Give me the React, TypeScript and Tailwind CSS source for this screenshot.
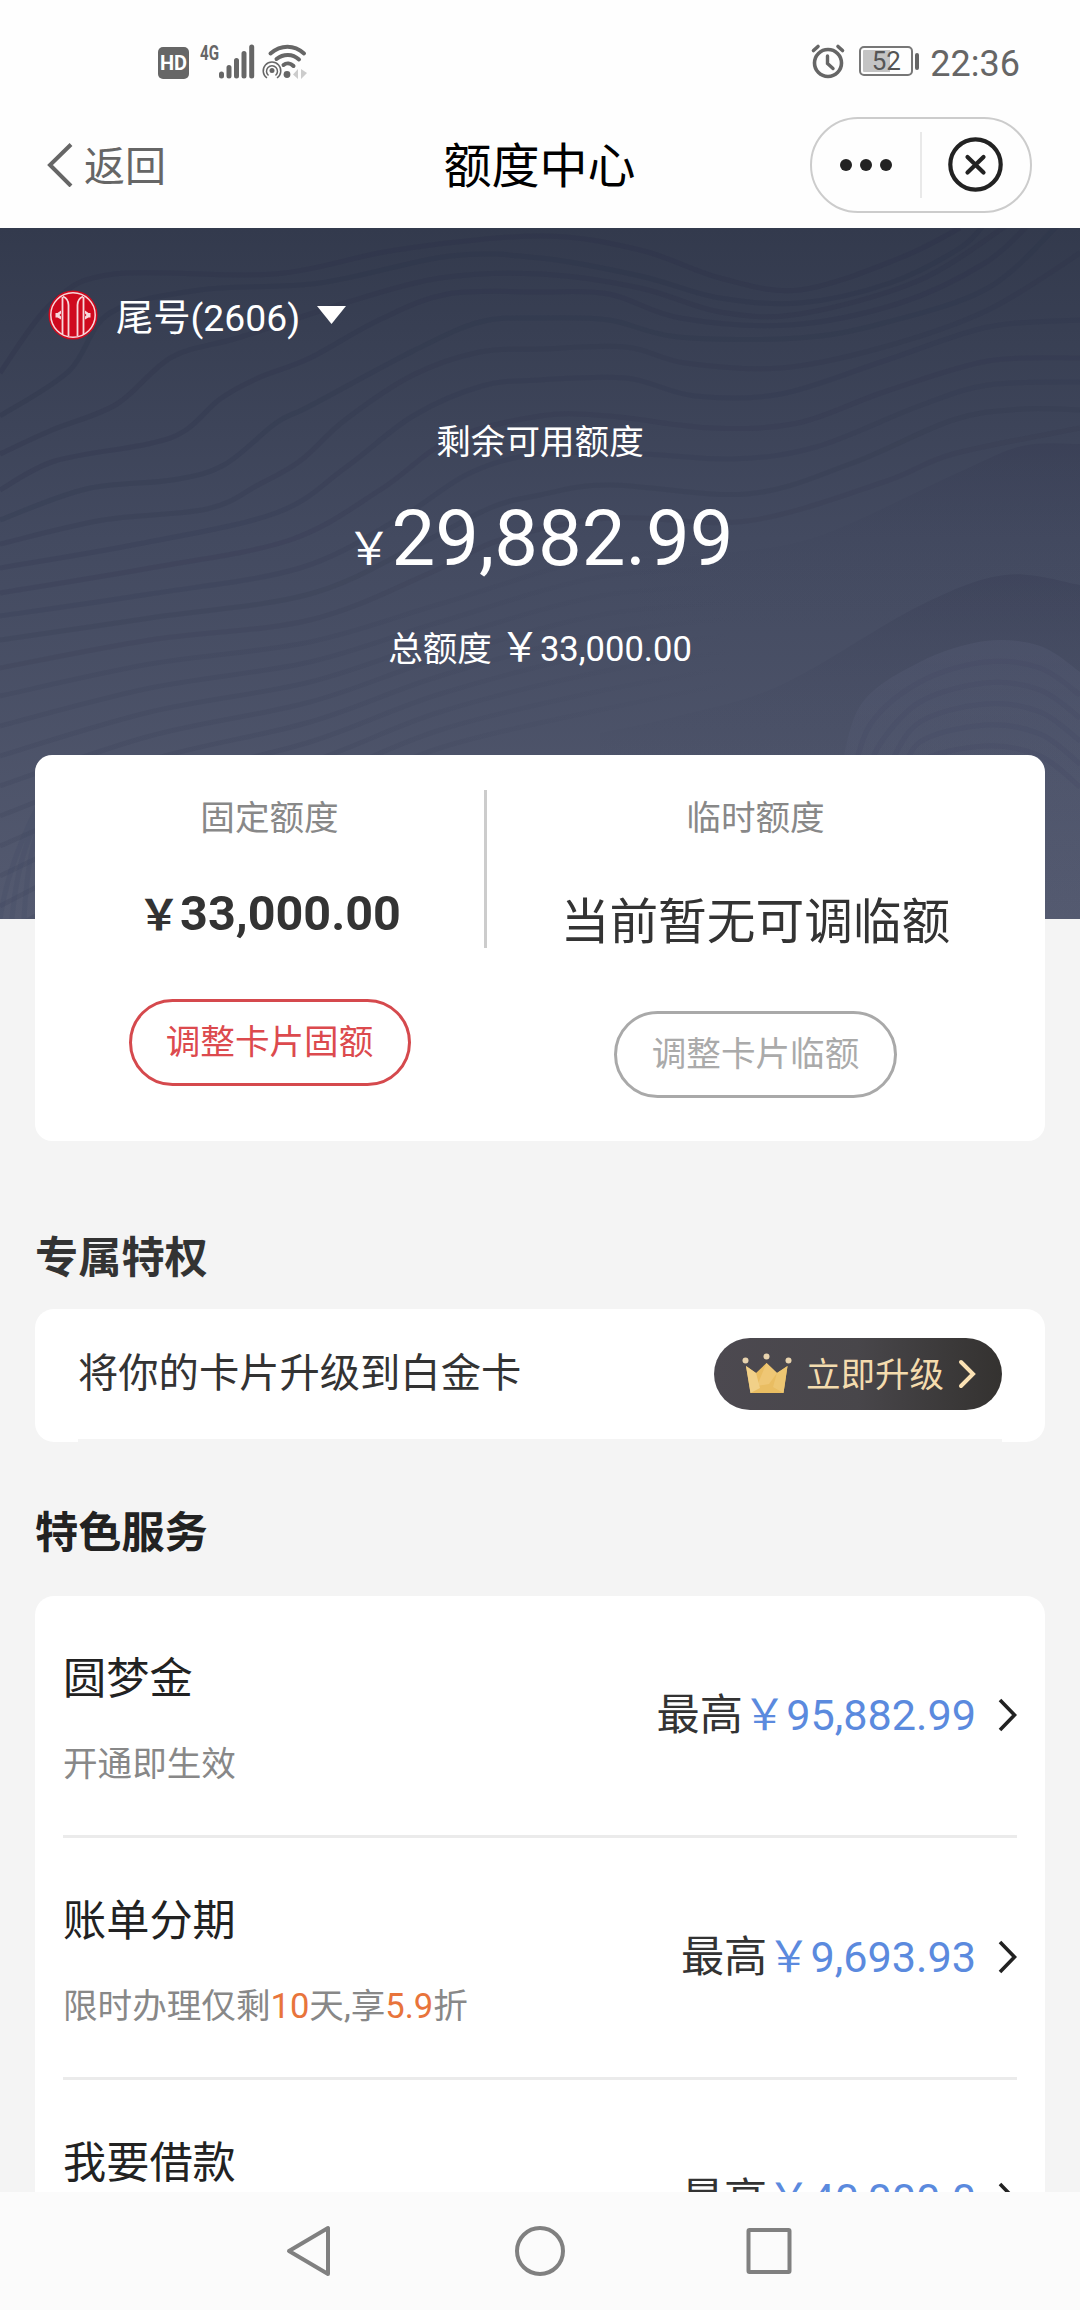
import { Fragment } from "react";

type Point = [number, number];

// Catmull-Rom spline through the points, written as cubic segments
const curve = (points: Point[]) => {
  let d = `M${points[0][0]} ${points[0][1]}`;
  for (let i = 0; i < points.length - 1; i++) {
    const p0 = points[i - 1] ?? points[i];
    const p1 = points[i];
    const p2 = points[i + 1];
    const p3 = points[i + 2] ?? p2;
    d += ` C${p1[0] + (p2[0] - p0[0]) / 6} ${p1[1] + (p2[1] - p0[1]) / 6} ${p2[0] - (p3[0] - p1[0]) / 6} ${p2[1] - (p3[1] - p1[1]) / 6} ${p2[0]} ${p2[1]}`;
  }
  return d;
};

const ridges: Point[][] = [
  [[0, 145], [52, 75], [114, 46], [275, 46], [396, 22], [540, 8], [640, 22], [720, 50], [800, 62], [900, 30], [960, 0]],
  [[0, 188], [69, 143], [110, 85], [200, 62], [320, 55], [450, 28], [540, 30], [640, 48], [720, 70], [800, 75], [890, 55], [960, 20], [985, -5]],
  [[0, 226], [52, 202], [117, 176], [172, 129], [241, 109], [345, 75], [440, 50], [540, 46], [640, 60], [720, 84], [800, 86], [920, 52], [1010, -5]],
  [[0, 262], [55, 233], [148, 216], [186, 202], [220, 171], [258, 150], [310, 130], [379, 92], [448, 66], [540, 64], [609, 66], [680, 90], [790, 97], [900, 75], [985, 35], [1030, -5]],
  [[0, 292], [86, 261], [172, 252], [224, 237], [276, 195], [310, 178], [413, 123], [480, 94], [540, 90], [609, 92], [678, 109], [798, 110], [884, 95], [988, 60], [1060, -5]],
  [[0, 316], [103, 292], [207, 281], [258, 257], [300, 233], [345, 192], [413, 147], [480, 124], [540, 121], [626, 119], [685, 135], [781, 140], [884, 119], [988, 82], [1080, 25]],
  [[0, 340], [138, 316], [276, 285], [345, 240], [413, 188], [482, 158], [540, 152], [626, 150], [695, 168], [781, 166], [884, 133], [988, 99], [1080, 92]],
  [[0, 365], [150, 340], [290, 312], [380, 262], [450, 212], [540, 188], [609, 188], [712, 200], [798, 195], [884, 164], [988, 133], [1080, 130]],
  [[0, 388], [150, 366], [300, 340], [400, 290], [470, 245], [540, 226], [640, 226], [733, 231], [816, 219], [919, 178], [988, 157], [1080, 154]],
  [[0, 412], [150, 390], [310, 366], [420, 316], [490, 280], [540, 267], [609, 257], [747, 266], [850, 236], [953, 192], [1022, 181], [1080, 182]],
  [[0, 440], [150, 412], [310, 392], [430, 345], [500, 312], [609, 290], [747, 293], [884, 254], [953, 226], [1080, 200]],
];

const lowerRidges = Array.from({ length: 9 }, (_, i) =>
  curve([[0, 468 + i * 30], [150, 436 + i * 24], [310, 414 + i * 20], [440, 376 + i * 18], [600, 330 + i * 19], [740, 326 + i * 16]]),
);

const mounds = Array.from({ length: 6 }, (_, i) =>
  curve([[838 + i * 12, 560], [860 + i * 10, 478 + i * 19], [920, 434 + i * 20], [985, 413 + i * 21], [1040, 418 + i * 22], [1080, 444 + i * 23]]),
);

const HeroWaves = () => (
  <svg className="absolute inset-0 h-full w-full" viewBox="0 0 1080 691" fill="none">
    <defs>
      <linearGradient id="shade" x1="0" y1="0" x2="0" y2="1">
        <stop offset="0" stopColor="#343850" stopOpacity="0.32" />
        <stop offset="0.6" stopColor="#3c425a" stopOpacity="0.1" />
        <stop offset="1" stopColor="#3c425a" stopOpacity="0" />
      </linearGradient>
      <linearGradient id="glow" x1="0" y1="0" x2="0" y2="1">
        <stop offset="0" stopColor="#5a607a" stopOpacity="0.3" />
        <stop offset="1" stopColor="#5a607a" stopOpacity="0" />
      </linearGradient>
      <linearGradient id="fade" gradientUnits="userSpaceOnUse" x1="300" y1="0" x2="740" y2="0">
        <stop offset="0" stopColor="#363c54" stopOpacity="0.2" />
        <stop offset="1" stopColor="#363c54" stopOpacity="0" />
      </linearGradient>
    </defs>
    {ridges.map((points, i) => (
      <path key={i} d={curve(points)} stroke="#2b3048" strokeOpacity={0.28 - i * 0.015} strokeWidth="5" />
    ))}
    {lowerRidges.map((d, i) => (
      <path key={i} d={d} stroke="url(#fade)" strokeWidth="5" />
    ))}
    <path d={`${curve([[640, 330], [712, 326], [816, 309], [953, 247], [1022, 218], [1080, 216]])} V400 H640 Z`} fill="url(#shade)" />
    <path d={`${curve([[600, 505], [678, 488], [781, 457], [919, 378], [1005, 347], [1080, 357]])} V560 H600 Z`} fill="url(#shade)" />
    <path d={`${mounds[0]} V691 H838 Z`} fill="url(#glow)" />
    {mounds.slice(1).map((d, i) => (
      <path key={i} d={d} stroke="#424862" strokeOpacity="0.25" strokeWidth="5" />
    ))}
    {[0, 1, 2].map((i) => (
      <path key={i} d={`M${i * 12} 691 Q${10 + i * 10} ${620 - i * 20} 60 ${540 + i * 20}`} stroke="#424862" strokeOpacity="0.22" strokeWidth="5" />
    ))}
  </svg>
);

const StatusBar = () => (
  <div className="flex h-[96px] items-start justify-between pt-[42px] pr-[60px] pl-[158px] text-[#666]">
    <div className="flex">
      <div className="mt-[5px] flex h-[32px] w-[31px] items-center justify-center rounded-[5px] bg-[#666] font-['Roboto'] text-[20px] leading-none font-bold text-white">
        HD
      </div>
      <svg className="ml-[8px]" width="112" height="40" viewBox="0 0 112 40" fill="none">
        <text x="3" y="17.5" fontFamily="Roboto, sans-serif" fontSize="20" fontWeight="700" fill="#666" textLength="19" lengthAdjust="spacingAndGlyphs">
          4G
        </text>
        <g stroke="#666" strokeWidth="5" strokeLinecap="round">
          <path d="M24.5 32V34M32 25.5V34M39.5 18.5V34M47 11.5V34M54.7 5V34" />
          <path d="M73.5 11.5C84 2.5 97 2.5 107 11.5" strokeWidth="4" />
          <path d="M79.5 17C86.5 11.5 95.5 11.5 102 17.5" strokeWidth="4" />
          <path d="M86.5 23C89.5 20.5 93.5 21 96.5 24" strokeWidth="4" />
        </g>
        <circle cx="90" cy="32.5" r="3.4" fill="#666" />
        <circle cx="75" cy="28.5" r="2.5" fill="#666" />
        <g stroke="#666" strokeWidth="1.5">
          <path d="M71.5 33.5A5.5 5.5 0 1 1 78.5 33.5" />
          <path d="M70 36A8.8 8.8 0 1 1 80 36" />
        </g>
        <path d="M101 27V37L96 32.5ZM104 27V37L110 31Z" fill="#ccc" />
      </svg>
    </div>
    <div className="flex items-start">
      <svg className="mr-[13px]" width="36" height="40" viewBox="0 0 36 40" fill="none" stroke="#666" strokeLinecap="round">
        <circle cx="18" cy="21" r="13.5" strokeWidth="3.6" />
        <path d="M17.5 14V21.5L23 26.5" strokeWidth="3.4" />
        <path d="M3.5 8.5L8 4.5M28 4.5L32.5 8.5" strokeWidth="3.6" />
      </svg>
      <div className="mt-[4px] flex items-center">
        <div className="flex h-[30px] w-[54px] items-center justify-center rounded-[5px] border-2 border-[#777] bg-[linear-gradient(to_right,#c4c4c4_58%,#fefefe_58%)] bg-clip-content p-[2px] font-['Roboto'] text-[26px] leading-none text-[#555]">
          52
        </div>
        <div className="ml-[2px] h-[17px] w-[4px] rounded-full bg-[#666]"></div>
      </div>
      <span className="ml-[11px] font-['Roboto'] text-[36px] leading-[44px]">22:36</span>
    </div>
  </div>
);

const TitleBar = () => (
  <div className="grid h-[132px] grid-cols-3 items-start pt-[21px] pr-[48px] pl-[47px]">
    <div className="flex h-[96px] items-center text-[#666]">
      <svg width="26" height="44" viewBox="0 0 26 44" fill="none" stroke="#666" strokeWidth="4">
        <path d="M24 1.5L3 22L24 43" />
      </svg>
      <span className="mt-[4px] ml-[11px] text-[41px] leading-none">返回</span>
    </div>
    <h1 className="flex h-[96px] items-center justify-center pt-[4px] text-[48px] leading-none text-black">额度中心</h1>
    <div className="flex h-[96px] w-[222px] items-center justify-self-end rounded-full border-2 border-[#ccc]">
      <div className="flex flex-1 items-center justify-center gap-[8px]">
        <i className="h-[12px] w-[12px] rounded-full bg-[#222]"></i>
        <i className="h-[12px] w-[12px] rounded-full bg-[#222]"></i>
        <i className="h-[12px] w-[12px] rounded-full bg-[#222]"></i>
      </div>
      <div className="h-[66px] w-[2px] bg-[#e9e9e9]"></div>
      <div className="flex flex-1 items-center justify-center">
        <svg width="56" height="56" viewBox="0 0 56 56" fill="none" stroke="#222" strokeWidth="4.2" strokeLinecap="round">
          <circle cx="27.5" cy="27.5" r="25.2" />
          <path d="M19.5 20L35.5 35.5M35.5 20L19.5 35.5" />
        </svg>
      </div>
    </div>
  </div>
);

const BankLogo = () => (
  <svg width="50" height="50" viewBox="0 0 50 50" fill="none">
    <circle cx="25" cy="25" r="24.5" fill="#cf0a1e" />
    <g stroke="#f7d9dc">
      <circle cx="25" cy="25" r="22.2" strokeWidth="1.5" />
      {/* pillars */}
      <path d="M15 6.5Q20.5 9 20.5 15V46M35 6.5Q29.5 9 29.5 15V46" strokeWidth="1.8" />
      <path d="M14.5 7V44M35.5 7V44" strokeWidth="1.8" />
    </g>
    <path d="M7.5 23H9.5L13 20.5V23.5L11.5 25L13 26.5V29.5L9.5 27.5H7.5ZM42.5 23H40.5L37 20.5V23.5L38.5 25L37 26.5V29.5L40.5 27.5H42.5Z" fill="#f7d9dc" />
  </svg>
);

const Crown = () => (
  <svg width="50" height="42" viewBox="0 0 50 42">
    <path d="M4 13L14 20L24.5 10L35 20L45.5 13L41.5 40H8.5Z" fill="#e9bd62" />
    <path d="M24.5 10L35 20L27 31L15 33Z" fill="#efc775" />
    <path d="M4 13L14 20L18 35L8.5 40Z" fill="#f1d088" />
    <path d="M45.5 13L35 20L31 34L41.5 40Z" fill="#edc672" />
    <g fill="#e8d3ae">
      <circle cx="3.5" cy="7.5" r="3" />
      <circle cx="24.5" cy="3.5" r="3" />
      <circle cx="46.5" cy="7.5" r="3" />
    </g>
  </svg>
);

const services = [
  {
    title: "圆梦金",
    amount: "95,882.99",
    note: <>开通即生效</>,
  },
  {
    title: "账单分期",
    amount: "9,693.93",
    note: (
      <>
        限时办理仅剩<b className="font-normal text-[#e8743b]">10</b>天,享<b className="font-normal text-[#e8743b]">5.9</b>折
      </>
    ),
  },
  {
    title: "我要借款",
    amount: "40,000.0",
    note: null,
  },
];

const App = () => {
  return (
    <div className="flex h-[2310px] w-[1080px] flex-col overflow-hidden bg-[#f4f4f4] font-['Roboto','Noto_Sans_CJK_SC',sans-serif]">
      <header className="bg-[#fefefe]">
        <StatusBar />
        <TitleBar />
      </header>

      <main className="min-h-0 flex-1 overflow-hidden">
        {/* Available credit */}
        <section className="relative h-[691px] bg-linear-to-b from-[#333a4d] via-[#434a60] via-45% to-[#545a70] text-white">
          <HeroWaves />
          <div className="relative flex flex-col items-center">
            <div className="mt-[62px] ml-[48px] flex h-[50px] items-center self-start">
              <BankLogo />
              <span className="mt-[8px] ml-[18px] text-[37.3px] leading-none">尾号(2606)</span>
              <svg className="ml-[17px]" width="29" height="18" viewBox="0 0 29 18">
                <path d="M0 0H29L14.5 18Z" fill="white" />
              </svg>
            </div>
            <p className="mt-[82px] text-[34.6px] leading-[40px]">剩余可用额度</p>
            <p className="mt-[32px] flex items-baseline leading-[90px]">
              <span className="text-[45px]">￥</span>
              <span className="text-[77.8px]">29,882.99</span>
            </p>
            <p className="mt-[33px] flex items-baseline text-[34.6px] leading-[40px]">
              总额度<span className="ml-[8px] text-[40px]">￥</span>
              <span>33,000.00</span>
            </p>
          </div>
        </section>

        {/* Fixed and temporary limits */}
        <section className="relative z-10 mx-[35px] mt-[-164px] flex h-[386px] rounded-[17px] bg-white">
          <div className="flex w-[449px] flex-col items-center pt-[43px] pl-[20px]">
            <h2 className="text-[34.6px] leading-[40px] text-[#888]">固定额度</h2>
            <p className="mt-[48px] flex h-[56px] items-baseline leading-[56px] font-bold text-[#333]">
              <span className="text-[42px]">￥</span>
              <span className="text-[48.5px]">33,000.00</span>
            </p>
            <button className="mt-[57px] h-[87px] w-[282px] rounded-full border-3 border-[#d5494d] pb-px text-[34.6px] leading-none text-[#dc4a4e]">
              调整卡片固额
            </button>
          </div>
          <div className="mt-[35px] h-[158px] w-[3px] bg-[#ccc]"></div>
          <div className="flex flex-1 flex-col items-center pt-[43px] pr-[21px]">
            <h2 className="text-[34.6px] leading-[40px] text-[#888]">临时额度</h2>
            <p className="mt-[55px] text-[48.7px] leading-[60px] text-[#333]">当前暂无可调临额</p>
            <button className="mt-[58px] h-[87px] w-[283px] rounded-full border-3 border-[#a9a9a9] pb-px text-[34.6px] leading-none text-[#aaa]">
              调整卡片临额
            </button>
          </div>
        </section>

        {/* Privileges */}
        <section className="px-[35px]">
          <h2 className="mt-[92px] text-[43.2px] leading-[52px] font-bold text-[#333]">专属特权</h2>
          <div className="mt-[24px] flex h-[133px] flex-col rounded-[19px] bg-white">
            <div className="flex h-[130px] items-center justify-between px-[43px]">
              <p className="text-[40.3px] leading-none text-[#333]">将你的卡片升级到白金卡</p>
              <button className="flex h-[72px] w-[288px] items-center rounded-full bg-linear-to-r from-[#4c4950] via-[#48464a] to-[#343230] pl-[28px] text-[34.5px] leading-none text-[#f4dcae]">
                <Crown />
                <span className="ml-[14px] pt-[2px]">立即升级</span>
                <svg className="ml-[14px]" width="19" height="30" viewBox="0 0 19 30" fill="none" stroke="#fbe2b4" strokeWidth="4" strokeLinecap="round">
                  <path d="M3 3L15 15L3 27" />
                </svg>
              </button>
            </div>
            <div className="mx-[43px] h-[3px] bg-[#f4f4f4]"></div>
          </div>
        </section>

        {/* Services */}
        <section className="px-[35px]">
          <h2 className="mt-[66px] text-[43.2px] leading-[52px] font-bold text-[#222]">特色服务</h2>
          <div className="mt-[36px] rounded-t-[19px] bg-white px-[28px]">
            {services.map((service, index) => (
              <Fragment key={service.title}>
                {index > 0 && <div className="h-[3px] bg-[#ebebeb]"></div>}
                <div className="flex h-[239px] items-center justify-between">
                  <div className="pt-[6px]">
                    <h3 className="text-[43.2px] leading-[52px] text-[#222]">{service.title}</h3>
                    <p className="mt-[38px] h-[40px] text-[34.6px] leading-[40px] text-[#888]">{service.note}</p>
                  </div>
                  <div className="flex items-center text-[43.2px] leading-none text-[#333]">
                    <span>最高</span>
                    <span className="text-[#5b8ade]">￥{service.amount}</span>
                    <svg className="ml-[22px]" width="19" height="34" viewBox="0 0 19 34" fill="none" stroke="#222" strokeWidth="3.6">
                      <path d="M2 2L16.5 17L2 32" />
                    </svg>
                  </div>
                </div>
              </Fragment>
            ))}
          </div>
        </section>
      </main>

      <nav className="flex h-[118px] shrink-0 items-center bg-[#fbfbfb] pl-[286px]">
        <svg width="506" height="54" viewBox="0 0 506 54" fill="none" stroke="#808080" strokeWidth="4" strokeLinejoin="round">
          <path d="M42 4V50L3 27Z" />
          <circle cx="254" cy="27" r="23" />
          <rect x="462.5" y="6" width="41" height="42" rx="1" />
        </svg>
      </nav>
    </div>
  );
};

export default App;
